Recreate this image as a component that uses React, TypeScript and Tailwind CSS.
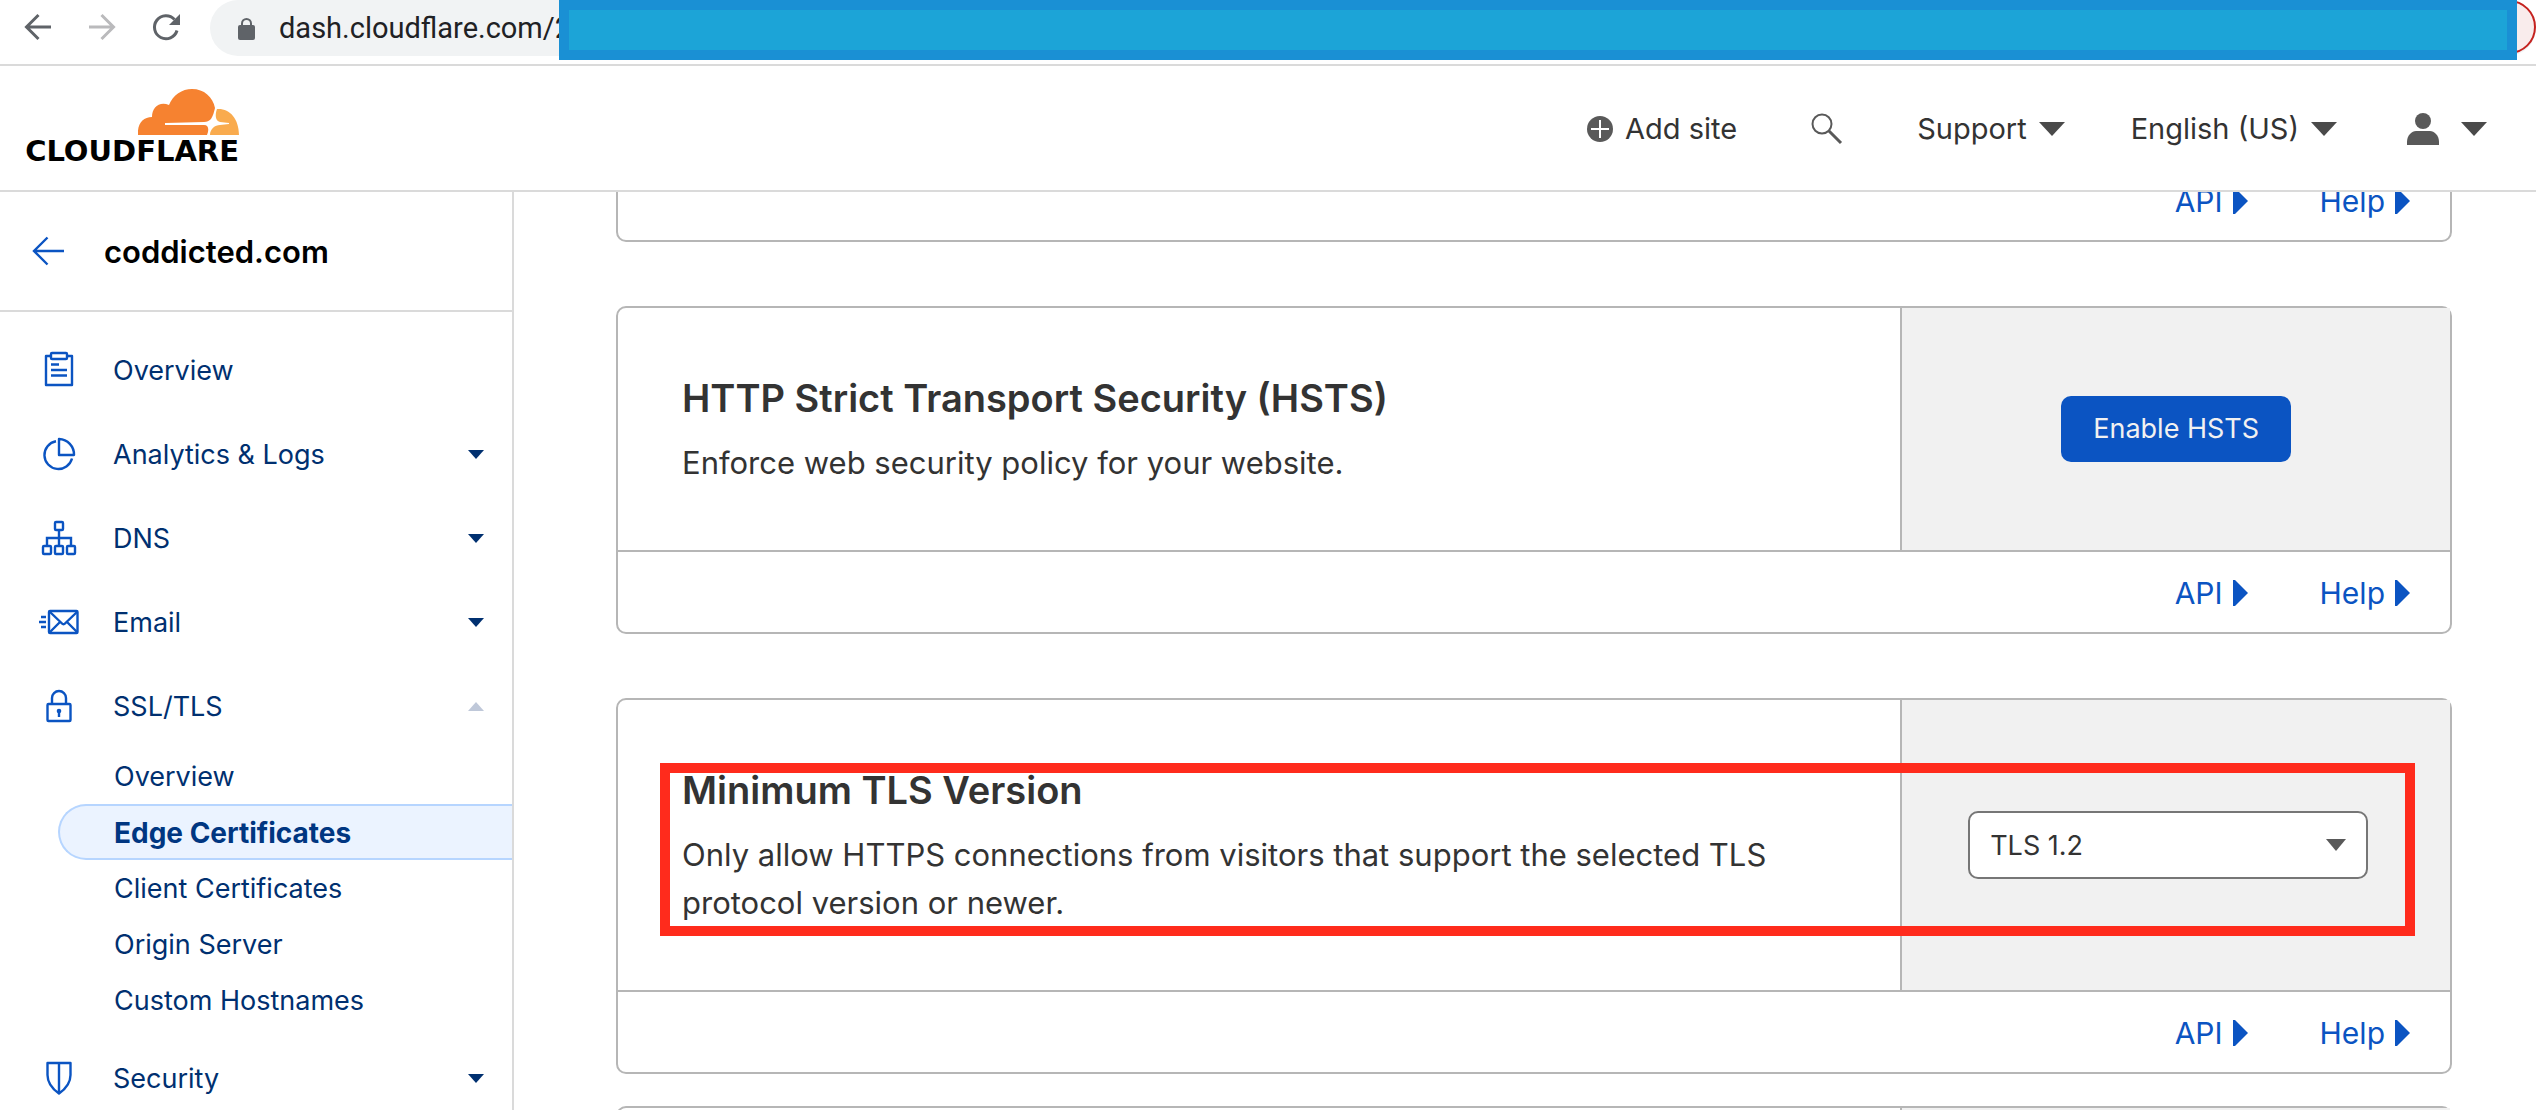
import type { ReactNode } from "react";

function Caret({ className }: { className: string }) {
  return (
    <svg viewBox="0 0 26 14" preserveAspectRatio="none" fill="currentColor" className={className} aria-hidden="true">
      <path d="M0 0h26L13 14z" />
    </svg>
  );
}

function ClipboardIcon() {
  return (
    <svg width="40" height="40" viewBox="0 0 40 40" fill="none" stroke="currentColor" strokeWidth="2.400">
      <path d="M12 6H7v29h26V6h-5" strokeLinejoin="round" />
      <rect x="12" y="3" width="16" height="6" rx="1" />
      <path d="M12 14.500h8M12 20h16M12 25.500h16" />
    </svg>
  );
}

function PieIcon() {
  return (
    <svg width="40" height="40" viewBox="0 0 40 40" fill="none" stroke="currentColor" strokeWidth="2.400">
      <path d="M17 7.200A14 14 0 1 0 33 24.500" />
      <path d="M20 5v16h15A15.500 15.500 0 0 0 20 5z" strokeLinejoin="round" />
    </svg>
  );
}

function NetworkIcon() {
  return (
    <svg width="40" height="40" viewBox="0 0 40 40" fill="none" stroke="currentColor" strokeWidth="2.400">
      <rect x="16" y="4" width="8" height="8" rx="1" />
      <rect x="4" y="28" width="8" height="8" rx="1" />
      <rect x="16" y="28" width="8" height="8" rx="1" />
      <rect x="28" y="28" width="8" height="8" rx="1" />
      <path d="M20 12v16M8 28v-8h24v8" />
    </svg>
  );
}

function EmailIcon() {
  return (
    <svg width="40" height="40" viewBox="0 0 40 40" fill="none" stroke="currentColor" strokeWidth="2.400">
      <rect x="10" y="9" width="28.500" height="22" rx="1" />
      <path d="M11 10l12 11.500a2 2 0 0 0 3 0L38 10M11 30l10-10M38 30L28 20M2 15h5M0 20h7M2 25h5" />
    </svg>
  );
}

function LockIcon() {
  return (
    <svg width="40" height="40" viewBox="0 0 40 40" fill="none" stroke="currentColor" strokeWidth="2.400">
      <rect x="8.500" y="18" width="23" height="17" rx="1" />
      <path d="M13 18v-6a7 7 0 0 1 14 0v6" />
      <circle cx="20" cy="25" r="2.300" fill="currentColor" stroke="none" />
      <path d="M20 25v6" />
    </svg>
  );
}

function ShieldIcon() {
  return (
    <svg width="40" height="40" viewBox="0 0 40 40" fill="none" stroke="currentColor" strokeWidth="2.400">
      <path d="M8.500 5h23v12c0 8-5 14-11.500 18.500C13.500 31 8.500 25 8.500 17zM20 5v30" strokeLinejoin="round" />
    </svg>
  );
}

const navItems = [
  { label: "Overview", icon: <ClipboardIcon />, expandable: false },
  { label: "Analytics & Logs", icon: <PieIcon />, expandable: true },
  { label: "DNS", icon: <NetworkIcon />, expandable: true },
  { label: "Email", icon: <EmailIcon />, expandable: true },
  {
    label: "SSL/TLS",
    icon: <LockIcon />,
    expandable: true,
    children: ["Overview", "Edge Certificates", "Client Certificates", "Origin Server", "Custom Hostnames"],
  },
  { label: "Security", icon: <ShieldIcon />, expandable: true },
];

function BrowserBar() {
  return (
    <div className="relative flex h-[66px] shrink-0 items-start overflow-hidden border-b-2 border-[#dadada] pl-[22px]">
      <div className="flex h-[54px] items-center gap-8 text-[#5f6368]">
        <button type="button" aria-label="Back">
          <svg width="32" height="32" viewBox="0 0 32 32" fill="none" stroke="currentColor" strokeWidth="3">
            <path d="M29 16H5M16.500 4L4.500 16l12 12" />
          </svg>
        </button>
        <button type="button" aria-label="Forward" className="text-[#bababc]">
          <svg width="32" height="32" viewBox="0 0 32 32" fill="none" stroke="currentColor" strokeWidth="3">
            <path d="M3 16h24M15.500 4l12 12-12 12" />
          </svg>
        </button>
        <button type="button" aria-label="Reload">
          <svg width="32" height="32" viewBox="0 0 32 32" fill="none" stroke="currentColor" strokeWidth="3">
            <path d="M27 19.500A11.500 11.500 0 1 1 24.500 8.500" />
            <path d="M30 3v11H19z" fill="currentColor" stroke="none" />
          </svg>
        </button>
      </div>
      <div className="ml-7 flex h-14 flex-1 items-center gap-6 rounded-full bg-[#f1f3f4] pt-0.5 pl-7">
        <svg width="17" height="22" viewBox="0 0 17 22" className="shrink-0" aria-hidden="true">
          <rect x="0" y="7" width="17" height="15" rx="2" fill="#5f6368" />
          <path d="M4 8V5.500a4.500 4.500 0 0 1 9 0V8" fill="none" stroke="#5f6368" strokeWidth="2" />
        </svg>
        <input
          type="text"
          aria-label="Address"
          defaultValue="dash.cloudflare.com/2"
          className="w-full bg-transparent font-[Roboto,sans-serif] text-[29px] text-[#202124] outline-none"
        />
      </div>
      <button
        type="button"
        aria-label="Update"
        className="-ml-[50px] h-[54px] w-[50px] rounded-r-full border-2 border-[#c5221f] bg-[#f9ecec]"
      />
      <div className="absolute top-0 right-[19px] left-[559px] h-[60px] border-10 border-[#1a90d4] bg-[#1ca4d7]" />
    </div>
  );
}

function Logo() {
  return (
    <a href="#home" aria-label="Cloudflare" className="flex w-[212px] flex-col items-end text-black">
      <svg width="101" height="46" viewBox="0 0 101 46" aria-hidden="true">
        <path
          fill="#f68230"
          d="M0 46c-1-11 5-18 14-18 0-9 7-16 17-12C35 6 44 0 54 0c12 0 21 8 23 19-1 4-2 8-4 11-2 2-4 3-7 3l-39 1v2h39c5 0 5 5 3 10z"
        />
        <path fill="#f9ab4e" d="M79 20c12-1 22 9 22 26H72c0-6 5-10 10-10l9-1v-1l-9-1c-5-1-5-8-3-13z" />
      </svg>
      <span className="font-['DejaVu_Sans',sans-serif] text-[29px] leading-8 font-bold">CLOUDFLARE</span>
    </a>
  );
}

function Header() {
  return (
    <header className="flex h-[126px] shrink-0 items-center justify-between border-b-2 border-[#dadada] pr-[49px] pl-[27px] text-[29px] text-[#333]">
      <Logo />
      <div className="flex items-center pt-0.5">
        <button type="button" className="flex items-center gap-3">
          <svg width="26" height="26" viewBox="0 0 26 26" aria-hidden="true">
            <circle cx="13" cy="13" r="13" fill="#595959" />
            <path d="M13 4v18M4 13h18" stroke="#fff" strokeWidth="2" />
          </svg>
          Add site
        </button>
        <button type="button" aria-label="Search" className="ml-[74px]">
          <svg width="32" height="32" viewBox="0 0 32 32" fill="none" stroke="#595959" strokeWidth="2">
            <circle cx="11" cy="11" r="9.500" />
            <path d="M18 18l12 12" strokeWidth="3" />
          </svg>
        </button>
        <button type="button" className="ml-[74px] flex items-center gap-3">
          Support <Caret className="h-[14px] w-[26px] text-[#4a4a4a]" />
        </button>
        <button type="button" className="ml-[66px] flex items-center gap-3">
          English (US) <Caret className="h-[14px] w-[26px] text-[#4a4a4a]" />
        </button>
        <button type="button" aria-label="Account" className="ml-[70px] flex items-center gap-[22px]">
          <svg width="32" height="32" viewBox="0 0 32 32" fill="#595959">
            <circle cx="16" cy="8" r="8" />
            <path d="M0 32v-3c0-7 5-11 9-11h14c4 0 9 4 9 11v3z" />
          </svg>
          <Caret className="h-[14px] w-[26px] text-[#4a4a4a]" />
        </button>
      </div>
    </header>
  );
}

function Sidebar() {
  return (
    <aside className="w-[514px] shrink-0 border-r-2 border-[#dadada] text-[27px] text-[#003070]">
      <div className="flex h-[120px] items-center gap-10 border-b-2 border-[#dadada] pl-8">
        <a href="#sites" aria-label="Back to sites" className="text-[#0b54c2]">
          <svg width="32" height="32" viewBox="0 0 32 32" fill="none" stroke="currentColor" strokeWidth="2.400">
            <path d="M32 16H2M15.500 2.500L2 16l13.500 13.500" />
          </svg>
        </a>
        <span className="pt-0.5 text-[31px] font-semibold text-black">coddicted.com</span>
      </div>
      <nav className="pt-4">
        <ul>
          {navItems.map((item) => (
            <li key={item.label}>
              <a href="#nav" className="flex h-21 items-center pr-7 pl-[39px]">
                <span className="mr-[34px] text-[#0b54c2]">{item.icon}</span>
                <span className="flex-1 pt-0.5">{item.label}</span>
                {item.expandable && (
                  <Caret
                    className={item.children ? "h-[9px] w-4 rotate-180 text-[#bfc8d9]" : "h-[9px] w-4"}
                  />
                )}
              </a>
              {item.children && (
                <ul className="mb-2">
                  {item.children.map((child) => (
                    <li key={child} className="pl-[58px]">
                      <a
                        href="#sub"
                        className={
                          child === "Edge Certificates"
                            ? "flex h-14 items-center rounded-l-full border-2 border-r-0 border-[#b6d5ff] bg-[#ebf3ff] pt-0.5 pl-[54px] text-[28px] font-bold text-[#003681]"
                            : "flex h-14 items-center pt-0.5 pl-14"
                        }
                      >
                        {child}
                      </a>
                    </li>
                  ))}
                </ul>
              )}
            </li>
          ))}
        </ul>
      </nav>
    </aside>
  );
}

function CardLinks() {
  return (
    <div className="flex h-[82px] items-center justify-end gap-[72px] border-t-2 border-[#b6b6b6] pt-0.5 pr-10 text-[30px] text-[#0b54c2]">
      {["API", "Help"].map((label) => (
        <a key={label} href="#docs" className="flex items-center gap-2.5">
          {label}
          <svg width="15" height="26" viewBox="0 0 15 26" fill="currentColor" aria-hidden="true">
            <path d="M0 0h2l13 13L2 26H0z" />
          </svg>
        </a>
      ))}
    </div>
  );
}

type CardProps = {
  title: string;
  text: string;
  highlighted?: boolean;
  children: ReactNode;
};

function SettingCard({ title, text, highlighted, children }: CardProps) {
  return (
    <section className="rounded-[10px] border-2 border-[#b6b6b6]">
      <div className="relative flex">
        <div className="w-7/10 px-16 pt-[65px] pb-[63px]">
          <h2 className="mb-4 text-[38px] leading-[50px] font-semibold">{title}</h2>
          <p className="text-[31px] leading-12">{text}</p>
        </div>
        <div className="flex w-3/10 items-center justify-center border-l-2 border-[#b6b6b6] bg-[#f1f1f1]">
          {children}
        </div>
        {highlighted && (
          <div className="pointer-events-none absolute top-[63px] right-[35px] bottom-[54px] left-[42px] border-10 border-[#ff2b1c]" />
        )}
      </div>
      <CardLinks />
    </section>
  );
}

export default function App() {
  return (
    <div className="flex h-screen flex-col overflow-hidden bg-white font-[Inter,sans-serif] text-[#333]">
      <BrowserBar />
      <Header />
      <div className="flex min-h-0 flex-1">
        <Sidebar />
        <main className="min-w-0 flex-1 overflow-hidden pr-[84px] pl-[102px]">
          <div className="-mt-9 flex flex-col gap-16">
            <section className="rounded-[10px] border-2 border-[#b6b6b6]">
              <CardLinks />
            </section>
            <SettingCard
              title="HTTP Strict Transport Security (HSTS)"
              text="Enforce web security policy for your website."
            >
              <button type="button" className="h-[66px] rounded-[10px] bg-[#0b54c2] px-8 text-[27px] text-[#f1f1f1]">
                Enable HSTS
              </button>
            </SettingCard>
            <SettingCard
              title="Minimum TLS Version"
              text="Only allow HTTPS connections from visitors that support the selected TLS protocol version or newer."
              highlighted
            >
              <div className="relative mr-4 w-[400px]">
                <select
                  aria-label="Minimum TLS Version"
                  defaultValue="TLS 1.2"
                  className="h-[68px] w-full appearance-none rounded-[10px] border-2 border-[#767676] bg-white px-5 pt-0.5 text-[27px]"
                >
                  <option>TLS 1.0</option>
                  <option>TLS 1.1</option>
                  <option>TLS 1.2</option>
                  <option>TLS 1.3</option>
                </select>
                <Caret className="pointer-events-none absolute top-7 right-[22px] h-3 w-5 text-[#595959]" />
              </div>
            </SettingCard>
          </div>
          <section className="mt-8 rounded-[10px] border-2 border-[#b6b6b6]">
            <div className="flex h-60">
              <div className="w-7/10" />
              <div className="w-3/10 border-l-2 border-[#b6b6b6] bg-[#f1f1f1]" />
            </div>
          </section>
        </main>
      </div>
    </div>
  );
}
